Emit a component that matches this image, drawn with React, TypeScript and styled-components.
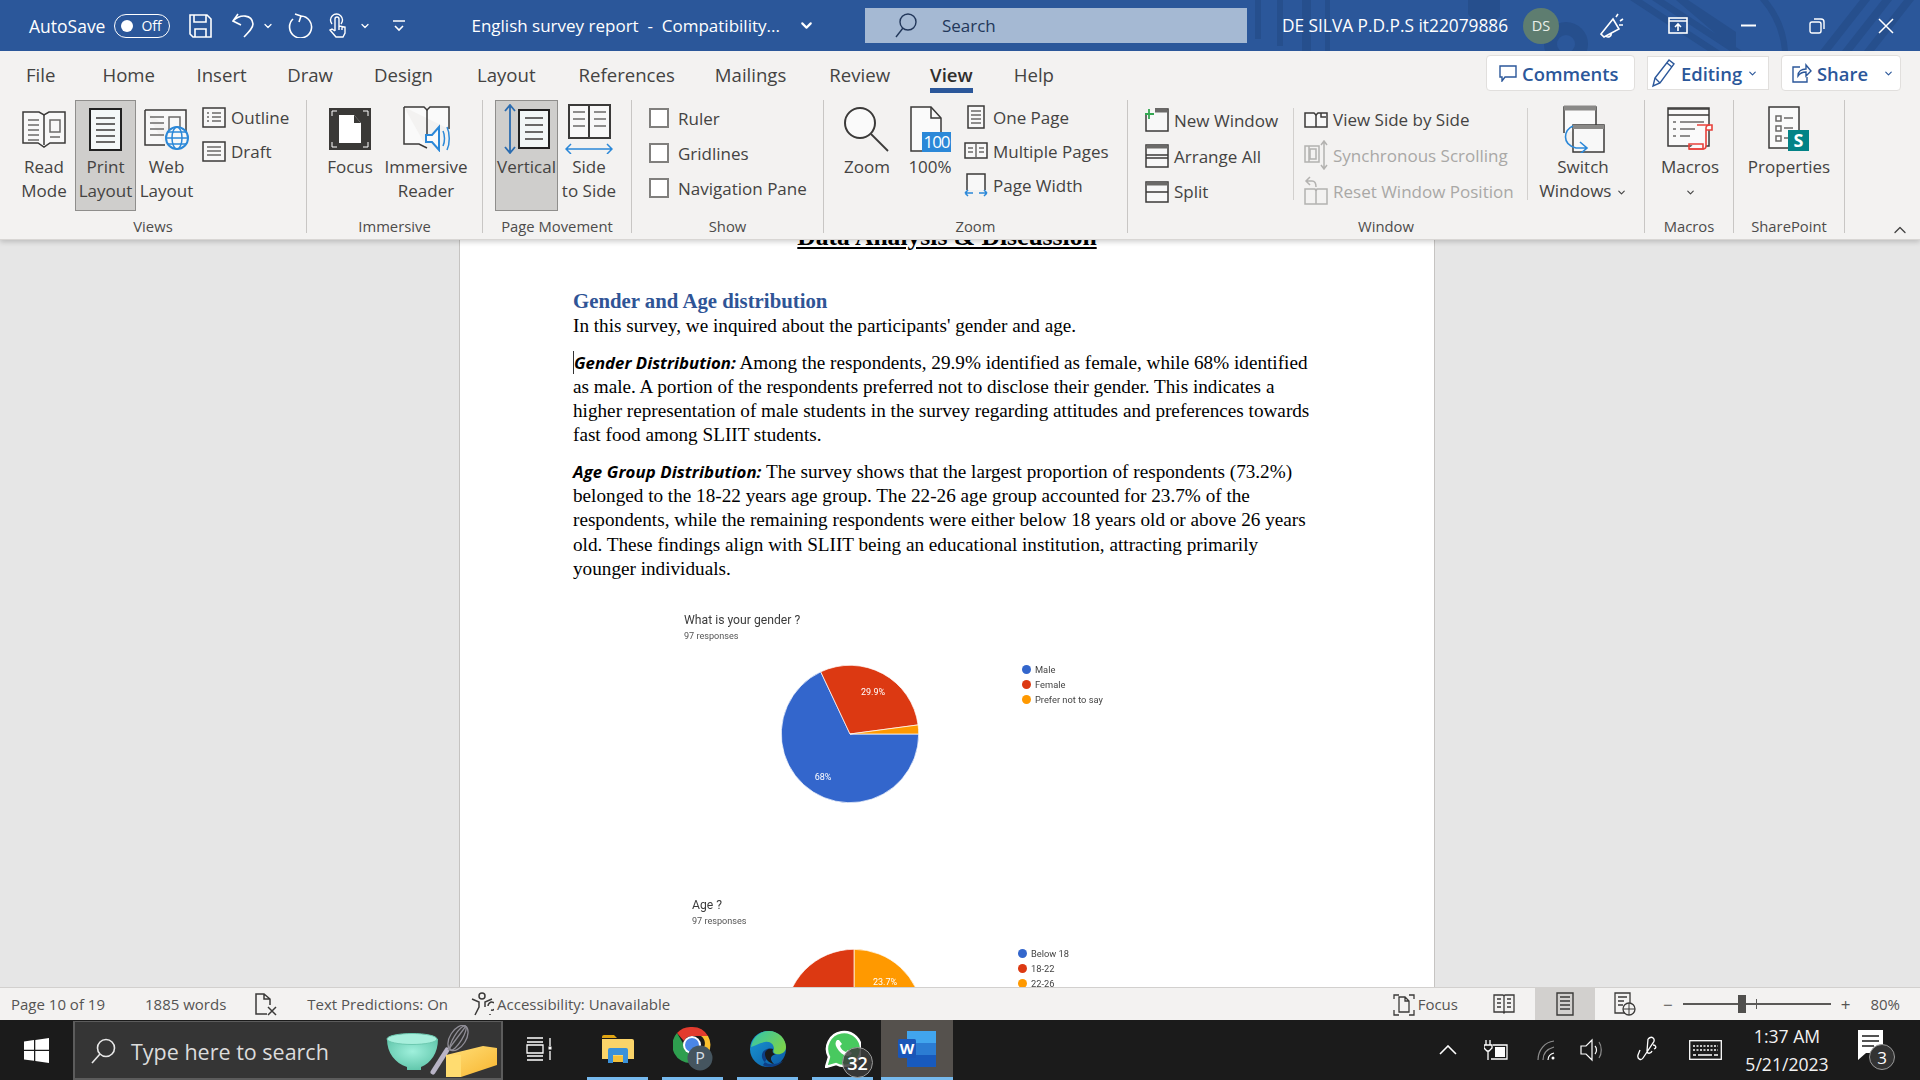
import React from 'react'
import styled, { createGlobalStyle } from 'styled-components'
import { ChevronDown, ChevronUp } from 'lucide-react'

const Global = createGlobalStyle`
  html, body { margin: 0; padding: 0; overflow: hidden; }
  body { font-family: "Open Sans", "Noto Sans", sans-serif; background: #e6e6e6; }
  * { box-sizing: border-box; }
`

const Shell = styled.div`
  width: 1920px;
  height: 1080px;
  display: flex;
  flex-direction: column;
  overflow: hidden;
`

/* ---------- title bar ---------- */
const TitleBar = styled.div`
  position: relative;
  height: 51px;
  flex: none;
  background: #2b579a;
  color: #fff;
  display: flex;
  align-items: center;
  font-size: 17px;
`
const TitleDeco = styled.svg`
  position: absolute;
  right: 0;
  top: 0;
`
const TitleItem = styled.div<{ $left: number }>`
  position: relative;
  margin-left: ${p => p.$left}px;
  display: flex;
  align-items: center;
  flex: none;
  white-space: nowrap;
`
const AutoSaveLabel = styled(TitleItem)`
  font-size: 17.5px;
`
const AccountName = styled(TitleItem)`
  font-size: 17.3px;
`
const Toggle = styled.div`
  width: 56px;
  height: 24px;
  border: 1.5px solid #fff;
  border-radius: 12px;
  display: flex;
  align-items: center;
  padding-left: 6px;
  gap: 8px;
  font-size: 14px;
  &::before {
    content: '';
    width: 12px;
    height: 12px;
    border-radius: 50%;
    background: #fff;
  }
`
const SearchBox = styled.div`
  position: relative;
  margin-left: 50px;
  width: 382px;
  height: 35px;
  flex: none;
  background: #a5b9d3;
  color: #22375a;
  display: flex;
  align-items: center;
  padding-left: 30px;
  gap: 25px;
  font-size: 17px;
`
const Avatar = styled.div`
  width: 36px;
  height: 36px;
  border-radius: 50%;
  background: #5e7d70;
  color: #e9efe9;
  font-size: 14.5px;
  display: flex;
  align-items: center;
  justify-content: center;
`

/* ---------- tabs ---------- */
const TabRow = styled.div`
  position: relative;
  z-index: 3;
  height: 44px;
  flex: none;
  background: #f3f2f1;
  display: flex;
  align-items: flex-start;
  padding-left: 26px;
`
const Tab = styled.div<{ $active?: boolean; $gap: number }>`
  height: 42px;
  margin-right: ${p => p.$gap}px;
  padding-top: 11px;
  font-size: 18.6px;
  line-height: 26px;
  color: ${p => (p.$active ? '#2f2e2d' : '#444342')};
  font-weight: ${p => (p.$active ? 600 : 400)};
  border-bottom: ${p => (p.$active ? '5px solid #2b579a' : '5px solid transparent')};
`
const TabActions = styled.div`
  position: absolute;
  top: 4px;
  right: 19px;
  display: flex;
  gap: 12px;
`
const ActionButton = styled.div<{ $width: number; $square?: boolean; $pad: number }>`
  width: ${p => p.$width}px;
  height: ${p => (p.$square ? 34 : 36)}px;
  margin-top: ${p => (p.$square ? 1 : 0)}px;
  padding-left: ${p => p.$pad}px;
  background: #fff;
  border: 1px solid #e1dfdd;
  border-radius: ${p => (p.$square ? 0 : 4)}px;
  display: flex;
  align-items: center;
  gap: 5px;
  color: #2b579a;
  font-size: 18.4px;
  font-weight: 600;
`
const ShareGap = styled.span`
  width: 5px;
`

/* ---------- ribbon ---------- */
const Ribbon = styled.div`
  position: relative;
  z-index: 2;
  height: 145px;
  flex: none;
  background: #f3f2f1;
  border-bottom: 1px solid #d8d6d4;
  box-shadow: 0 2px 5px rgba(0, 0, 0, 0.18);
  display: flex;
  align-items: flex-start;
  padding-top: 5px;
  color: #444342;
  font-size: 17px;
`
const Group = styled.div<{ $width: number }>`
  width: ${p => p.$width}px;
  height: 133px;
  flex: none;
  border-right: 1px solid #c8c6c4;
  display: flex;
  flex-direction: column;
`
const GroupBody = styled.div<{ $pad: number }>`
  height: 116px;
  flex: none;
  padding-left: ${p => p.$pad}px;
  display: flex;
  align-items: flex-start;
`
const GroupLabel = styled.div`
  height: 20px;
  flex: none;
  line-height: 20px;
  text-align: center;
  font-size: 14.8px;
  color: #4d4c4b;
`
const LargeButton = styled.div<{ $width: number; $pressed?: boolean; $gap?: number; $before?: number }>`
  width: ${p => p.$width}px;
  height: 111px;
  flex: none;
  margin-left: ${p => p.$before ?? 0}px;
  margin-right: ${p => p.$gap ?? 0}px;
  background: ${p => (p.$pressed ? '#cfcecc' : 'transparent')};
  outline: ${p => (p.$pressed ? '1px solid #8f8e8c' : 'none')};
  outline-offset: -1px;
  display: flex;
  flex-direction: column;
  align-items: center;
`
const IconZone = styled.div`
  height: 55px;
  width: 100%;
  display: flex;
  align-items: center;
  justify-content: center;
  padding-top: 3px;
  flex: none;
`
const Caption = styled.div`
  text-align: center;
  line-height: 24px;
  white-space: nowrap;
`
const CaptionChevron = styled(ChevronDown)`
  vertical-align: -1px;
`
const SmallColumn = styled.div<{ $width?: number; $divider?: boolean; $top: number; $gap: number; $rowGap?: number }>`
  width: ${p => (p.$width ? `${p.$width}px` : 'auto')};
  height: ${p => (p.$divider ? 92 : 100)}px;
  margin-left: ${p => p.$gap}px;
  margin-top: ${p => (p.$divider ? 8 : 0)}px;
  padding-top: ${p => p.$top}px;
  border-right: ${p => (p.$divider ? '1px solid #d2d0ce' : 'none')};
  flex: none;
  display: flex;
  flex-direction: column;
  gap: ${p => p.$rowGap ?? 10}px;
`
const SmallRow = styled.div<{ $muted?: boolean }>`
  height: 24px;
  display: flex;
  align-items: center;
  white-space: nowrap;
  color: ${p => (p.$muted ? '#a9a8a6' : 'inherit')};
  & > svg { flex: none; margin-right: 5px; }
`
const CheckColumn = styled.div`
  padding-top: 6px;
  display: flex;
  flex-direction: column;
  gap: 11px;
`
const CheckRow = styled.label`
  height: 24px;
  display: flex;
  align-items: center;
  gap: 9px;
  white-space: nowrap;
`
const CheckBox = styled.span`
  width: 20px;
  height: 20px;
  background: #fff;
  border: 2px solid #807f7d;
`
const Collapse = styled.div`
  position: absolute;
  right: 10px;
  bottom: -1px;
  color: #444;
  display: flex;
`

/* ---------- document ---------- */
const DocArea = styled.div`
  flex: 1;
  min-height: 0;
  overflow: hidden;
  background: #e6e6e6;
  padding-left: 459px;
`
const Page = styled.div`
  width: 976px;
  height: 1100px;
  background: #fff;
  border-left: 1px solid #c6c4c2;
  border-right: 1px solid #c6c4c2;
  padding-left: 113px;
  font-family: "Liberation Serif", serif;
  color: #000;
`
const ClippedHeading = styled.div`
  margin: -19px 0 0 -113px;
  height: 32px;
  line-height: 32px;
  text-align: center;
  font-size: 25.6px;
  font-weight: 700;
  text-decoration: underline;
  white-space: nowrap;
`
const SectionTitle = styled.h2`
  margin: 35px 0 0;
  font-size: 20.8px;
  line-height: 26px;
  font-weight: 700;
  color: #2f5496;
`
const Para = styled.p<{ $top: number }>`
  margin: ${p => p.$top}px 0 0;
  font-size: 19.2px;
  line-height: 24.2px;
  white-space: nowrap;
`
const Lead = styled.span`
  font-family: "Open Sans", sans-serif;
  font-weight: 700;
  font-style: italic;
  font-size: 16.8px;
  line-height: 20px;
  border-left: 1px solid #333;
`
const LeadPlain = styled(Lead)`
  border-left: 0;
  letter-spacing: 0.1px;
`
const Chart = styled.figure<{ $left: number; $top: number }>`
  margin: ${p => p.$top}px 0 0 ${p => p.$left}px;
  font-family: Roboto, "Liberation Sans", sans-serif;
  color: #333;
  filter: blur(0.25px);
`
const ChartTitle = styled.div`
  font-size: 12.2px;
  line-height: 16px;
  color: #3c3c3c;
`
const ChartSub = styled.div`
  font-size: 9.1px;
  line-height: 14px;
  margin-top: 1px;
  color: #555;
`
const ChartBody = styled.div<{ $pieLeft: number; $pieTop: number; $legendGap: number }>`
  display: flex;
  align-items: flex-start;
  margin-top: ${p => p.$pieTop}px;
  padding-left: ${p => p.$pieLeft}px;
  gap: ${p => p.$legendGap}px;
`
const Legend = styled.ul<{ $top: number }>`
  list-style: none;
  margin: ${p => p.$top}px 0 0;
  padding: 0;
`
const LegendItem = styled.li<{ $color: string }>`
  height: 14.7px;
  display: flex;
  align-items: center;
  gap: 4px;
  font-size: 9.3px;
  color: #444;
  white-space: nowrap;
  &::before {
    content: '';
    width: 9px;
    height: 9px;
    border-radius: 50%;
    background: ${p => p.$color};
  }
`

/* ---------- status bar ---------- */
const StatusBar = styled.div`
  position: relative;
  z-index: 2;
  height: 33px;
  flex: none;
  background: #f3f2f1;
  border-top: 1px solid #d2d0ce;
  display: flex;
  align-items: center;
  color: #555453;
  font-size: 15px;
  padding-right: 20px;
`
const StatusItem = styled.div<{ $left: number | 'auto' }>`
  margin-left: ${p => (p.$left === 'auto' ? 'auto' : `${p.$left}px`)};
  display: flex;
  align-items: center;
  gap: 3px;
  white-space: nowrap;
  flex: none;
`
const ViewButton = styled.div<{ $active?: boolean; $left: number; $width: number }>`
  width: ${p => p.$width}px;
  height: 32px;
  margin-left: ${p => p.$left}px;
  background: ${p => (p.$active ? '#d2d0ce' : 'transparent')};
  display: flex;
  align-items: center;
  justify-content: center;
  flex: none;
`
const ZoomSlider = styled.div`
  position: relative;
  width: 148px;
  height: 2px;
  margin-left: 10px;
  background: #5a5957;
  flex: none;
`
const ZoomThumb = styled.span`
  position: absolute;
  left: 55px;
  top: -8px;
  width: 8px;
  height: 18px;
  background: #504f4d;
`
const ZoomTick = styled.span`
  position: absolute;
  left: 73px;
  top: -4px;
  width: 1px;
  height: 10px;
  background: #5a5957;
`
const ZoomSign = styled.span<{ $left: number }>`
  margin-left: ${p => p.$left}px;
  font-size: 17px;
  line-height: 1;
  color: #555453;
  flex: none;
`

/* ---------- taskbar ---------- */
const Taskbar = styled.div`
  height: 60px;
  flex: none;
  background: #1b1b1b;
  display: flex;
  align-items: stretch;
  color: #fff;
`
const StartButton = styled.div`
  width: 73px;
  display: flex;
  align-items: center;
  padding-left: 24px;
  flex: none;
`
const TaskSearch = styled.div`
  width: 430px;
  flex: none;
  margin-top: 1px;
  background: #353535;
  border: 2px solid #5c5c5c;
  border-top-width: 1px;
  display: flex;
  align-items: center;
  padding-left: 15px;
  padding-top: 2px;
  gap: 15px;
  font-size: 21.5px;
  color: #dcdcdc;
  white-space: nowrap;
`
const SearchArt = styled.svg`
  margin-left: auto;
  margin-right: 3px;
  flex: none;
`
const TaskIcon = styled.div<{ $active?: boolean; $left: number; $width?: number; $open?: boolean }>`
  width: ${p => p.$width ?? 61}px;
  margin-left: ${p => p.$left}px;
  flex: none;
  position: relative;
  display: flex;
  align-items: center;
  justify-content: center;
  background: ${p => (p.$active ? '#55514d' : 'transparent')};
  border-bottom: 3px solid ${p => (p.$open ? '#76b9ed' : 'transparent')};
`
const IconBadge = styled.span`
  position: absolute;
  left: 30px;
  top: 27px;
  width: 31px;
  height: 31px;
  border-radius: 50%;
  background: rgba(60, 60, 60, 0.85);
  border: 1px solid #9a9a9a;
  color: #fff;
  font-size: 18px;
  font-weight: 600;
  display: flex;
  align-items: center;
  justify-content: center;
`
const Tray = styled.div`
  margin-left: auto;
  display: flex;
  align-items: center;
  flex: none;
`
const TrayIcon = styled.div<{ $left: number }>`
  margin-left: ${p => p.$left}px;
  display: flex;
  flex: none;
`
const Clock = styled.div`
  width: 100px;
  margin-left: 15px;
  text-align: center;
  font-size: 17.6px;
  line-height: 28px;
  color: #f2f2f2;
`
const Notify = styled.div`
  position: relative;
  width: 32px;
  height: 40px;
  margin: 0 30px 0 21px;
  flex: none;
`
const NotifyBadge = styled.span`
  position: absolute;
  left: 11px;
  top: 14px;
  width: 26px;
  height: 26px;
  border-radius: 50%;
  background: #333;
  border: 1px solid #9a9a9a;
  font-size: 17px;
  display: flex;
  align-items: center;
  justify-content: center;
`

/* ---------- icons ---------- */
const dark = '#3b3a39'
const grey = '#6b6a68'
const blue = '#2b88d8'

const Svg = (p: { w: number; h: number; children: React.ReactNode; color?: string }) => (
  <svg width={p.w} height={p.h} viewBox={`0 0 ${p.w} ${p.h}`} fill="none" stroke={p.color ?? dark} strokeWidth={1.5}>
    {p.children}
  </svg>
)

const Lines = (p: { x: number; y: number; w: number; n: number; step: number; color?: string }) => (
  <>
    {Array.from({ length: p.n }).map((_, i) => (
      <path key={i} d={`M${p.x} ${p.y + i * p.step}h${p.w}`} stroke={p.color ?? grey} />
    ))}
  </>
)

const ReadIcon = () => (
  <Svg w={44} h={38}>
    <path d="M1 2h16l5 3 5-3h16v31H28l-6 4-6-4H1z" fill="#f8f8f8" />
    <path d="M22 5v30" />
    <Lines x={6} y={10} w={11} n={5} step={5} />
    <Lines x={28} y={27} w={10} n={1} step={5} />
    <rect x={28} y={10} width={10} height={12} stroke={grey} />
  </Svg>
)
const PrintIcon = () => (
  <Svg w={33} h={43}>
    <rect x={1} y={1} width={31} height={41} fill="#f4f8f8" strokeWidth={2} stroke="#222" />
    <Lines x={7} y={10} w={19} n={5} step={6} color={dark} />
  </Svg>
)
const WebIcon = () => (
  <Svg w={46} h={42}>
    <path d="M1 2h41v25H32M1 2v35h20" fill="#f8f8f8" />
    <Lines x={6} y={9} w={14} n={4} step={6} />
    <rect x={25} y={9} width={11} height={15} stroke={grey} />
    <circle cx={33} cy={30} r={11} fill="#f8f8f8" stroke={blue} strokeWidth={2} />
    <ellipse cx={33} cy={30} rx={5} ry={11} stroke={blue} />
    <path d="M22 30h22M24 24h18M24 36h18" stroke={blue} />
  </Svg>
)
const OutlineIcon = () => (
  <Svg w={24} h={21}>
    <rect x={1} y={1} width={22} height={19} fill="#f8f8f8" />
    <path d="M5 6h2M5 10h2M5 14h2M10 6h9M10 10h9M10 14h9" stroke={grey} />
  </Svg>
)
const DraftIcon = () => (
  <Svg w={24} h={21}>
    <rect x={1} y={1} width={22} height={19} fill="#f8f8f8" />
    <path d="M5 6h14M5 10h14M5 14h14" stroke={grey} />
  </Svg>
)
const FocusIcon = () => (
  <svg width={42} height={42} viewBox="0 0 42 42">
    <rect width={42} height={42} fill="#3a3937" />
    <path d="M10 7h15l7 8v20H10z" fill="#fff" />
    <path d="M25 7v8h7z" fill="#3a3937" />
    <path d="M3 8V3h5M39 8V3h-5M3 34v5h5M39 34v5h-5" stroke="#fff" fill="none" />
  </svg>
)
const ImmersiveIcon = () => (
  <Svg w={47} h={46}>
    <path d="M1 1h20l3 3 3-3h19v22M1 1v37h15l8 4" fill="#fafafa" />
    <path d="M24 4v30" />
    <path d="M23 29h6l7-8v23l-7-8h-6z" fill="#fafafa" stroke={blue} strokeWidth={2} />
    <path d="M40 25c2 4 2 11 0 15M44 21c3 6 3 17 0 23" stroke={blue} />
  </Svg>
)
const VerticalIcon = () => (
  <Svg w={47} h={50}>
    <path d="M7 1v48M2 7l5-6 5 6M2 43l5 6 5-6" stroke="#2b6cb0" strokeWidth={1.8} />
    <rect x={16} y={6} width={30} height={38} fill="#f2f7f7" stroke="#222" strokeWidth={2} />
    <Lines x={22} y={14} w={18} n={4} step={7} color={dark} />
  </Svg>
)
const SideIcon = () => (
  <Svg w={48} h={50}>
    <rect x={4} y={1} width={41} height={33} fill="#f8f8f8" strokeWidth={2} />
    <path d="M24 1v33" strokeWidth={2} />
    <Lines x={8} y={8} w={12} n={3} step={7} />
    <Lines x={29} y={8} w={12} n={3} step={7} />
    <path d="M1 45h46M6 40l-5 5 5 5M42 40l5 5-5 5" stroke={blue} />
  </Svg>
)
const ZoomIcon = () => (
  <Svg w={46} h={46}>
    <circle cx={16} cy={17} r={15} fill="#fafafa" strokeWidth={2} />
    <path d="M27 28l17 17" strokeWidth={1.8} />
  </Svg>
)
const HundredIcon = () => (
  <svg width={41} height={46} viewBox="0 0 41 46">
    <path d="M1 1h20l10 11v33H1z" fill="#fafafa" stroke={dark} strokeWidth={1.5} />
    <path d="M21 1v11h10" fill="none" stroke={dark} strokeWidth={1.5} />
    <rect x={12} y={26} width={29} height={20} fill="#2b88d8" />
    <text x={26.5} y={42} fill="#fff" fontSize={17} textAnchor="middle" fontFamily="Open Sans" letterSpacing={-1}>100</text>
  </svg>
)
const OnePageIcon = () => (
  <Svg w={24} h={24}>
    <rect x={4} y={1} width={16} height={22} fill="#f8f8f8" />
    <path d="M7 6h10M7 10h10M7 14h10M7 18h10" stroke={grey} />
  </Svg>
)
const MultiIcon = () => (
  <Svg w={24} h={18}>
    <rect x={1} y={1} width={22} height={15} fill="#f8f8f8" />
    <path d="M12 1v15M4 6h5M4 10h5M15 6h5M15 10h5" stroke={grey} />
  </Svg>
)
const WidthIcon = () => (
  <Svg w={24} h={24}>
    <path d="M3 17V1h18v16" fill="#f8f8f8" />
    <path d="M1 20h8M1 20l3-3M1 20l3 3M23 20h-8M23 20l-3-3M23 20l-3 3" stroke={blue} />
  </Svg>
)
const NewWindowIcon = () => (
  <Svg w={24} h={24}>
    <path d="M1 5v18h22V1H10" fill="#f8f8f8" />
    <path d="M10 3h13" strokeWidth={3} stroke={grey} />
    <path d="M4 1v10M0 6h9" stroke="#33a852" strokeWidth={1.8} />
  </Svg>
)
const ArrangeIcon = () => (
  <Svg w={24} h={24}>
    <rect x={1} y={1} width={22} height={22} fill="#f8f8f8" />
    <path d="M1 11h22M1 14h22" />
    <path d="M1 3h22" strokeWidth={3} stroke={grey} />
  </Svg>
)
const SplitIcon = () => (
  <Svg w={24} h={22}>
    <rect x={1} y={1} width={22} height={20} fill="#f8f8f8" />
    <path d="M1 11h22" />
    <path d="M1 3h22" strokeWidth={3} stroke={grey} />
  </Svg>
)
const SideBySideIcon = () => (
  <Svg w={24} h={18}>
    <path d="M1 2h9l2 2 2-2h9v14H1z" fill="#f8f8f8" />
    <path d="M12 4v12M17 2v4h5" />
  </Svg>
)
const SyncIcon = () => (
  <Svg w={24} h={30} color="#b3b2b0">
    <path d="M1 6h14v16H1zM5 6v16" />
    <path d="M6 9h6v10H6z" />
    <path d="M20 1v28M17 5l3-4 3 4M17 25l3 4 3-4" />
  </Svg>
)
const ResetIcon = () => (
  <Svg w={24} h={30} color="#b3b2b0">
    <path d="M6 1L2 5l4 4M2 5h6c3 0 4 2 4 6" />
    <path d="M1 13h10l1 2 1-2h10v15H1zM12 15v13" />
  </Svg>
)
const SwitchIcon = () => (
  <Svg w={44} h={48}>
    <path d="M3 28V2h32v19" fill="#fafafa" />
    <path d="M3 3h32" strokeWidth={5} stroke="#8a8987" />
    <rect x={12} y={20} width={31} height={27} fill="#f8f8f8" />
    <path d="M12 22h31" strokeWidth={4} stroke="#8a8987" />
    <path d="M12 21c-9 4-12 18 3 22h10M19 37l7 6-7 6" stroke={blue} strokeWidth={1.6} />
  </Svg>
)
const MacrosIcon = () => (
  <Svg w={46} h={46}>
    <rect x={1} y={2} width={41} height={38} fill="#fafafa" />
    <path d="M1 9h41M1 3h41" />
    <path d="M6 16h3M6 23h3M6 30h3M13 16h24M13 23h15M13 30h10" stroke={grey} />
    <path d="M22 43h14c3 0 3-3 3-3V22c0-3 2-3 4-3h2v5h-6" fill="#fafafa" stroke="#e8413b" strokeWidth={1.6} />
    <path d="M22 38h14v5H22zM30 19h13" stroke="#e8413b" strokeWidth={1.6} />
  </Svg>
)
const PropsIcon = () => (
  <svg width={42} height={46} viewBox="0 0 42 46" fill="none">
    <rect x={1} y={1} width={30} height={41} fill="#fafafa" stroke={dark} strokeWidth={1.5} />
    <path d="M8 10h5v5H8zM8 20h5v5H8zM8 30h5v5H8zM16 12h9M16 22h9M16 32h4" stroke={grey} strokeWidth={1.5} />
    <rect x={20} y={24} width={21} height={21} fill="#038387" />
    <text x={30.5} y={41} fontSize={18} fontWeight={700} fill="#fff" textAnchor="middle" fontFamily="Open Sans">S</text>
  </svg>
)
const White = (p: { w: number; h: number; children: React.ReactNode; sw?: number }) => (
  <svg width={p.w} height={p.h} viewBox={`0 0 ${p.w} ${p.h}`} fill="none" stroke="#fff" strokeWidth={p.sw ?? 1.6}>
    {p.children}
  </svg>
)

const Chevron = (p: { size?: number; color?: string }) => (
  <ChevronDown size={p.size ?? 12} color={p.color ?? '#fff'} strokeWidth={2.5} />
)

function ChromeLogo() {
  return (
    <svg width={40} height={46} viewBox="0 0 40 46">
      <path d="M19 1a18 18 0 0 1 16 9H19a9 9 0 0 0-8 5L4 7A18 18 0 0 1 19 1z" fill="#e33b2e" />
      <path d="M35 10a18 18 0 0 1-14 27l8-13a9 9 0 0 0-1-14z" fill="#fbc02d" />
      <path d="M4 7l7 12a9 9 0 0 0 10 9l-2 9A18 18 0 0 1 4 7z" fill="#2e9e4f" />
      <circle cx={19} cy={19} r={9} fill="#fff" />
      <circle cx={19} cy={19} r={7} fill="#4a86e8" />
      <circle cx={27} cy={32} r={12.5} fill="#45555f" />
      <text x={27} y={38} fontSize={16} fill="#d5dde2" textAnchor="middle" fontFamily="Open Sans">P</text>
    </svg>
  )
}
function EdgeLogo() {
  return (
    <svg width={38} height={38} viewBox="0 0 38 38">
      <defs>
        <linearGradient id="eg" x1="0" y1="0" x2="1" y2="1">
          <stop offset="0" stopColor="#1a9ad6" />
          <stop offset="1" stopColor="#0c59a4" />
        </linearGradient>
        <linearGradient id="eg2" x1="0" y1="0" x2="1" y2="0.6">
          <stop offset="0" stopColor="#31c4b0" />
          <stop offset="1" stopColor="#7ad34c" />
        </linearGradient>
      </defs>
      <circle cx={19} cy={19} r={18} fill="url(#eg)" />
      <path d="M2 17C4 6 12 1 20 1c10 0 17 8 17 16 0 6-6 8-10 7-3-1-3-3-2-5 0-5-4-8-9-7-6 1-10 4-14 5z" fill="url(#eg2)" />
      <path d="M24 19c-6-2-12 2-11 8 1 7 10 10 21 4-6 7-16 7-20 4" fill="#0d3f86" />
      <path d="M16 24c0-4 4-6 8-5-1 3 0 5 3 5-4 1-8 4-2 10-6-1-9-6-9-10z" fill="#1b1b1b" />
    </svg>
  )
}
function WhatsappLogo() {
  return (
    <svg width={36} height={38} viewBox="0 0 36 38">
      <path d="M1 37l3-10A17 17 0 1 1 11 34z" fill="#48c95f" stroke="#fff" strokeWidth={2.5} />
      <path d="M12 10c-2 2-2 5 0 8 2 4 6 7 10 8 2 0 4-1 5-3l-4-3-2 2c-3-1-5-3-6-6l2-2-3-4z" fill="#fff" />
    </svg>
  )
}
function WordLogo() {
  return (
    <svg width={38} height={38} viewBox="0 0 38 38">
      <path d="M9 1h27a2 2 0 0 1 2 2v32a2 2 0 0 1-2 2H11a2 2 0 0 1-2-2z" fill="#2b7cd3" />
      <rect x={9} y={1} width={29} height={12} fill="#41a5ee" />
      <rect x={9} y={25} width={29} height={12} fill="#185abd" />
      <rect x={0} y={9} width={18} height={19} rx={1.5} fill="#1a56b8" />
      <text x={9} y={24} fontSize={15} fontWeight={700} fill="#fff" textAnchor="middle" fontFamily="Open Sans">W</text>
    </svg>
  )
}
function FolderLogo() {
  return (
    <svg width={32} height={30} viewBox="0 0 32 30">
      <path d="M0 3a2 2 0 0 1 2-2h10l3 3H0z" fill="#e0a412" />
      <path d="M0 5h30a2 2 0 0 1 2 2v18H0z" fill="#fbd469" />
      <path d="M6 29V16a2 2 0 0 1 2-2h16a2 2 0 0 1 2 2v13h-5v-8H11v8z" fill="#3a91d9" />
      <rect x={11} y={22} width={10} height={6} fill="#f4c13a" />
    </svg>
  )
}

const Pie = (p: { slices: { from: number; to: number; color: string }[]; labels: { x: number; y: number; t: string }[] }) => {
  const cx = 70
  const cy = 70
  const r = 68.7
  const pt = (deg: number) => {
    const a = ((deg - 90) * Math.PI) / 180
    return `${cx + r * Math.cos(a)} ${cy + r * Math.sin(a)}`
  }
  return (
    <svg width={140} height={140} viewBox="0 0 140 140">
      {p.slices.map(s => (
        <path
          key={s.color}
          d={`M${cx} ${cy}L${pt(s.from)}A${r} ${r} 0 ${s.to - s.from > 180 ? 1 : 0} 1 ${pt(s.to)}Z`}
          fill={s.color}
          stroke="#fff"
          strokeWidth={0.7}
        />
      ))}
      {p.labels.map(l => (
        <text key={l.t} x={l.x} y={l.y} fill="#fff" fontSize={9} textAnchor="middle" fontFamily="Roboto">
          {l.t}
        </text>
      ))}
    </svg>
  )
}

const tabs: [string, number, boolean?][] = [
  ['File', 47], ['Home', 41.5], ['Insert', 40.5], ['Draw', 41], ['Design', 44], ['Layout', 43],
  ['References', 40], ['Mailings', 43], ['Review', 40], ['View', 41, true], ['Help', 0],
]

export default function App() {
  return (
    <Shell>
      <Global />
      <TitleBar>
        <TitleDeco width={680} height={51} viewBox="0 0 680 51" fill="#264f8d">
          <path d="M15 0h6v39h-6zM37 0h6v46h-6zM62 0h9v51h-9zM85 0h5v51h-5z" />
          <path d="M228 0h32v16c-6 8-24 10-32-2z" />
          <circle cx={326} cy={44} r={22} />
          <circle cx={326} cy={44} r={9} fill="#2b579a" />
          <path d="M390 0h12l78 51h-12zM412 0h12l78 51h-12zM436 0h12l48 32v19z" />
          <path d="M528 0a90 90 0 0 1 20 51h-6a90 90 0 0 0-22-51z" />
          <path d="M620 0h10l-40 51h-10zM642 0h10l-40 51h-10zM664 0h10l-40 51h-10z" />
        </TitleDeco>
        <AutoSaveLabel $left={29}>AutoSave</AutoSaveLabel>
        <TitleItem $left={9}><Toggle>Off</Toggle></TitleItem>
        <TitleItem $left={19}>
          <White w={23} h={24}>
            <path d="M1 1h17l4 4v18H4l-3-3zM5 1v7h12V1M6 23v-8h11v8" />
          </White>
        </TitleItem>
        <TitleItem $left={20}>
          <White w={22} h={25}>
            <path d="M6 1L1 8l8 4M1 8C8 1 20 1 21 11c0 4-4 8-9 13" />
          </White>
        </TitleItem>
        <TitleItem $left={8}><Chevron /></TitleItem>
        <TitleItem $left={14}>
          <White w={25} h={25}>
            <path d="M13 3a11 11 0 1 1-8 3M7 1l6 2-2 6" />
          </White>
        </TitleItem>
        <TitleItem $left={16}>
          <White w={18} h={25} sw={1.4}>
            <path d="M3 11a6 6 0 1 1 9 0M6 18V6a2 2 0 0 1 4 0v7l6 1v6l-2 4H7l-6-7 2-1 3 2M10 13v4M13 14v3" />
          </White>
        </TitleItem>
        <TitleItem $left={12}><Chevron /></TitleItem>
        <TitleItem $left={21}>
          <White w={14} h={12} sw={1.6}>
            <path d="M1 1h12M3 6l4 4 4-4" />
          </White>
        </TitleItem>
        <TitleItem $left={65}>English survey report&nbsp; -&nbsp; Compatibility...</TitleItem>
        <TitleItem $left={18}><ChevronDown size={17} color="#fff" strokeWidth={3} /></TitleItem>
        <SearchBox>
          <svg width={22} height={26} viewBox="0 0 22 26" fill="none" stroke="#22375a" strokeWidth={1.4}>
            <circle cx={13} cy={9} r={8} />
            <path d="M8 15L1 24" />
          </svg>
          Search
        </SearchBox>
        <AccountName $left={35}>DE SILVA P.D.P.S it22079886</AccountName>
        <TitleItem $left={15}><Avatar>DS</Avatar></TitleItem>
        <TitleItem $left={41}>
          <White w={24} h={25}>
            <path d="M13 6l-12 15 3 3 15-8zM6 23a3 3 0 0 0 5-3M16 4l2-3M20 8l3-2M19 12h4" />
          </White>
        </TitleItem>
        <TitleItem $left={44}>
          <White w={20} h={17}>
            <rect x={1} y={1} width={18} height={15} />
            <path d="M1 4h18M10 14V7M7 10l3-3 3 3" />
          </White>
        </TitleItem>
        <TitleItem $left={53}>
          <White w={15} h={3} sw={2}><path d="M0 1.5h15" /></White>
        </TitleItem>
        <TitleItem $left={53}>
          <White w={16} h={16} sw={1.4}>
            <rect x={1} y={4} width={11} height={11} rx={2} />
            <path d="M5 1h7a3 3 0 0 1 3 3v7" />
          </White>
        </TitleItem>
        <TitleItem $left={53}>
          <White w={16} h={16} sw={1.5}><path d="M1 1l14 14M15 1L1 15" /></White>
        </TitleItem>
      </TitleBar>

      <TabRow>
        {tabs.map(([name, gap, active]) => (
          <Tab key={name} $gap={gap} $active={active}>{name}</Tab>
        ))}
        <TabActions>
          <ActionButton $width={149} $pad={12}>
            <svg width={18} height={18} viewBox="0 0 18 18" fill="none" stroke="#2b579a" strokeWidth={1.4}>
              <path d="M1 2h16v11H6l-3 4v-4H1z" />
            </svg>
            Comments
          </ActionButton>
          <ActionButton $width={122} $square $pad={2}>
            <svg width={26} height={30} viewBox="0 0 26 30" fill="none" stroke="#2b579a" strokeWidth={1.4}>
              <path d="M5 20L19 2l5 4L10 25l-7 3z" />
              <path d="M5 20l5 5M17 5l5 4" />
            </svg>
            Editing
            <Chevron size={11} color="#2b579a" />
          </ActionButton>
          <ActionButton $width={120} $pad={10}>
            <svg width={20} height={20} viewBox="0 0 20 20" fill="none" stroke="#2b579a" strokeWidth={1.4}>
              <path d="M8 4H1v15h14v-5M6 13c0-5 4-7 8-7V2l5 6-5 5V9c-3 0-6 1-8 4z" />
            </svg>
            Share
            <ShareGap />
            <Chevron size={11} color="#2b579a" />
          </ActionButton>
        </TabActions>
      </TabRow>

      <Ribbon>
        <Group $width={307}>
          <GroupBody $pad={14}>
            <LargeButton $width={60} $gap={1}><IconZone><ReadIcon /></IconZone><Caption>Read<br />Mode</Caption></LargeButton>
            <LargeButton $width={61} $pressed><IconZone><PrintIcon /></IconZone><Caption>Print<br />Layout</Caption></LargeButton>
            <LargeButton $width={61}><IconZone><WebIcon /></IconZone><Caption>Web<br />Layout</Caption></LargeButton>
            <SmallColumn $gap={5} $top={5}>
              <SmallRow><OutlineIcon />Outline</SmallRow>
              <SmallRow><DraftIcon />Draft</SmallRow>
            </SmallColumn>
          </GroupBody>
          <GroupLabel>Views</GroupLabel>
        </Group>
        <Group $width={176}>
          <GroupBody $pad={15}>
            <LargeButton $width={56} $gap={3}><IconZone><FocusIcon /></IconZone><Caption>Focus</Caption></LargeButton>
            <LargeButton $width={90}><IconZone><ImmersiveIcon /></IconZone><Caption>Immersive<br />Reader</Caption></LargeButton>
          </GroupBody>
          <GroupLabel>Immersive</GroupLabel>
        </Group>
        <Group $width={149}>
          <GroupBody $pad={12}>
            <LargeButton $width={63} $pressed $gap={1}><IconZone><VerticalIcon /></IconZone><Caption>Vertical</Caption></LargeButton>
            <LargeButton $width={60}><IconZone><SideIcon /></IconZone><Caption>Side<br />to Side</Caption></LargeButton>
          </GroupBody>
          <GroupLabel>Page Movement</GroupLabel>
        </Group>
        <Group $width={192}>
          <GroupBody $pad={17}>
            <CheckColumn>
              <CheckRow><CheckBox />Ruler</CheckRow>
              <CheckRow><CheckBox />Gridlines</CheckRow>
              <CheckRow><CheckBox />Navigation Pane</CheckRow>
            </CheckColumn>
          </GroupBody>
          <GroupLabel>Show</GroupLabel>
        </Group>
        <Group $width={304}>
          <GroupBody $pad={15}>
            <LargeButton $width={56} $gap={5}><IconZone><ZoomIcon /></IconZone><Caption>Zoom</Caption></LargeButton>
            <LargeButton $width={60}><IconZone><HundredIcon /></IconZone><Caption>100%</Caption></LargeButton>
            <SmallColumn $gap={4} $top={5}>
              <SmallRow><OnePageIcon />One Page</SmallRow>
              <SmallRow><MultiIcon />Multiple Pages</SmallRow>
              <SmallRow><WidthIcon />Page Width</SmallRow>
            </SmallColumn>
          </GroupBody>
          <GroupLabel>Zoom</GroupLabel>
        </Group>
        <Group $width={517}>
          <GroupBody $pad={17}>
            <SmallColumn $width={149} $gap={0} $top={0} $divider $rowGap={12}>
              <SmallRow><NewWindowIcon />New Window</SmallRow>
              <SmallRow><ArrangeIcon />Arrange All</SmallRow>
              <SmallRow><SplitIcon />Split</SmallRow>
            </SmallColumn>
            <SmallColumn $width={224} $gap={10} $top={0} $divider $rowGap={12}>
              <SmallRow><SideBySideIcon />View Side by Side</SmallRow>
              <SmallRow $muted><SyncIcon />Synchronous Scrolling</SmallRow>
              <SmallRow $muted><ResetIcon />Reset Window Position</SmallRow>
            </SmallColumn>
            <LargeButton $width={100} $before={5}>
              <IconZone><SwitchIcon /></IconZone>
              <Caption>Switch<br />Windows <CaptionChevron size={11} color="#444" strokeWidth={2.5} /></Caption>
            </LargeButton>
          </GroupBody>
          <GroupLabel>Window</GroupLabel>
        </Group>
        <Group $width={89}>
          <GroupBody $pad={14}>
            <LargeButton $width={62}>
              <IconZone><MacrosIcon /></IconZone>
              <Caption>Macros<br /><CaptionChevron size={11} color="#444" strokeWidth={2.5} /></Caption>
            </LargeButton>
          </GroupBody>
          <GroupLabel>Macros</GroupLabel>
        </Group>
        <Group $width={111}>
          <GroupBody $pad={10}>
            <LargeButton $width={90}><IconZone><PropsIcon /></IconZone><Caption>Properties</Caption></LargeButton>
          </GroupBody>
          <GroupLabel>SharePoint</GroupLabel>
        </Group>
        <Collapse><ChevronUp size={20} strokeWidth={1.6} /></Collapse>
      </Ribbon>

      <DocArea>
        <Page>
          <ClippedHeading>Data Analysis &amp; Discussion</ClippedHeading>
          <SectionTitle>Gender and Age distribution</SectionTitle>
          <Para $top={0}>In this survey, we inquired about the participants' gender and age.</Para>
          <Para $top={12.5}>
            <Lead>Gender Distribution:</Lead> Among the respondents, 29.9% identified as female, while 68% identified<br />
            as male. A portion of the respondents preferred not to disclose their gender. This indicates a<br />
            higher representation of male students in the survey regarding attitudes and preferences towards<br />
            fast food among SLIIT students.
          </Para>
          <Para $top={12.5}>
            <LeadPlain>Age Group Distribution:</LeadPlain> The survey shows that the largest proportion of respondents (73.2%)<br />
            belonged to the 18-22 years age group. The 22-26 age group accounted for 23.7% of the<br />
            respondents, while the remaining respondents were either below 18 years old or above 26 years<br />
            old. These findings align with SLIIT being an educational institution, attracting primarily<br />
            younger individuals.
          </Para>
          <Chart $left={111} $top={30.5}>
            <ChartTitle>What is your gender ?</ChartTitle>
            <ChartSub>97 responses</ChartSub>
            <ChartBody $pieLeft={96} $pieTop={21} $legendGap={102}>
              <Pie
                slices={[
                  { from: 90, to: 334.8, color: '#3366cc' },
                  { from: 334.8, to: 82.4 + 360, color: '#dc3912' },
                  { from: 82.4, to: 90, color: '#ff9900' },
                ]}
                labels={[{ x: 43, y: 116, t: '68%' }, { x: 93, y: 31, t: '29.9%' }]}
              />
              <Legend $top={-1}>
                <LegendItem $color="#3366cc">Male</LegendItem>
                <LegendItem $color="#dc3912">Female</LegendItem>
                <LegendItem $color="#ff9900">Prefer not to say</LegendItem>
              </Legend>
            </ChartBody>
          </Chart>
          <Chart $left={119} $top={93}>
            <ChartTitle>Age ?</ChartTitle>
            <ChartSub>97 responses</ChartSub>
            <ChartBody $pieLeft={92} $pieTop={20} $legendGap={94}>
              <Pie
                slices={[
                  { from: 0, to: 85.3, color: '#ff9900' },
                  { from: 85.3, to: 360, color: '#dc3912' },
                ]}
                labels={[{ x: 101, y: 37, t: '23.7%' }]}
              />
              <Legend $top={-1}>
                <LegendItem $color="#3366cc">Below 18</LegendItem>
                <LegendItem $color="#dc3912">18-22</LegendItem>
                <LegendItem $color="#ff9900">22-26</LegendItem>
              </Legend>
            </ChartBody>
          </Chart>
        </Page>
      </DocArea>

      <StatusBar>
        <StatusItem $left={11}>Page 10 of 19</StatusItem>
        <StatusItem $left={40}>1885 words</StatusItem>
        <StatusItem $left={28}>
          <Svg w={24} h={24}>
            <path d="M13 22H2V2h8l6 5v6M10 2v5h6M14 15l8 8M22 15l-8 8" />
          </Svg>
        </StatusItem>
        <StatusItem $left={29}>Text Predictions: On</StatusItem>
        <StatusItem $left={23}>
          <Svg w={23} h={24}>
            <circle cx={11} cy={4} r={3} />
            <path d="M1 7l7 3v5l-4 8M21 7l-7 3v5M17 14a4 4 0 1 1 3 4M19 23v-1" />
          </Svg>
          Accessibility: Unavailable
        </StatusItem>
        <StatusItem $left="auto">
          <Svg w={22} h={24}>
            <path d="M6 3H1v4M16 3h5v4M1 18v5h5M21 18v5h-5M6 5h6l4 4v11H6zM12 5v4h4" strokeWidth={1.3} />
          </Svg>
          Focus
        </StatusItem>
        <ViewButton $left={26} $width={40}>
          <Svg w={22} h={20}>
            <path d="M1 1h9l1 1 1-1h9v17H12l-1 1-1-1H1zM11 2v16M4 5h4M4 9h4M4 13h4M14 5h4M14 9h4M14 13h4" strokeWidth={1.3} />
          </Svg>
        </ViewButton>
        <ViewButton $left={11} $width={60} $active>
          <Svg w={18} h={24}>
            <path d="M1 1h16v22H1zM4 5h10M4 9h10M4 13h10M4 17h10" strokeWidth={1.4} />
          </Svg>
        </ViewButton>
        <ViewButton $left={10} $width={40}>
          <Svg w={22} h={24}>
            <path d="M1 1h15v20H1zM4 5h9M4 9h6M4 13h5" strokeWidth={1.3} />
            <circle cx={15} cy={17} r={6} fill="#f3f2f1" strokeWidth={1.3} />
            <path d="M9 17h12M15 11v12" strokeWidth={1} />
          </Svg>
        </ViewButton>
        <ZoomSign $left={18}>−</ZoomSign>
        <ZoomSlider><ZoomThumb /><ZoomTick /></ZoomSlider>
        <ZoomSign $left={10}>+</ZoomSign>
        <StatusItem $left={20}>80%</StatusItem>
      </StatusBar>

      <Taskbar>
        <StartButton>
          <svg width={25} height={25} viewBox="0 0 25 25" fill="#fff">
            <path d="M0 3.5l10-1.4v9.7H0zM11.3 1.9L25 0v11.8H11.3zM0 13h10v9.8L0 21.4zM11.3 13H25v12l-13.7-1.9z" />
          </svg>
        </StartButton>
        <TaskSearch>
          <svg width={26} height={26} viewBox="0 0 26 26" fill="none" stroke="#e8e8e8" strokeWidth={1.6}>
            <circle cx={16} cy={10} r={8.5} />
            <path d="M10 16L2 25" />
          </svg>
          Type here to search
          <SearchArt width={112} height={52} viewBox="0 0 112 52">
            <defs>
              <radialGradient id="bowl" cx="0.5" cy="0.4" r="0.6">
                <stop offset="0" stopColor="#9ff0dc" />
                <stop offset="1" stopColor="#62c7ac" />
              </radialGradient>
              <linearGradient id="butter" x1="0" y1="0" x2="1" y2="1">
                <stop offset="0" stopColor="#ffe07a" />
                <stop offset="1" stopColor="#f8b52f" />
              </linearGradient>
            </defs>
            <path d="M1 14c0 14 8 24 20 28v3h14v-3c10-4 17-14 17-28z" fill="url(#bowl)" />
            <ellipse cx={26} cy={14} rx={25} ry={5.5} fill="#a7efdc" stroke="#6cc9b0" />
            <path d="M47 47l14-22" stroke="#b9b4c6" strokeWidth={5} strokeLinecap="round" />
            <g fill="none" stroke="#8f8d96" strokeWidth={1.3}>
              <ellipse cx={72} cy={13} rx={8} ry={14} transform="rotate(32 72 13)" />
              <ellipse cx={72} cy={13} rx={4} ry={14} transform="rotate(32 72 13)" />
              <path d="M62 25L80 1" />
            </g>
            <path d="M60 30l37-9 14 2v17L75 52H60z" fill="url(#butter)" />
            <path d="M60 30h15v22H60z" fill="#ffdc70" />
          </SearchArt>
        </TaskSearch>
        <TaskIcon $left={0} $width={72}>
          <svg width={26} height={24} viewBox="0 0 26 24" fill="none" stroke="#fff" strokeWidth={1.3}>
            <path d="M1 1h16M1 5h16M1 8h16v8H1zM1 19h16M1 23h16M24 1v8M24 14v9" />
            <rect x={22.5} y={9.5} width={3} height={3} fill="#fff" stroke="none" />
          </svg>
        </TaskIcon>
        <TaskIcon $left={12} $open><FolderLogo /></TaskIcon>
        <TaskIcon $left={14} $open><ChromeLogo /></TaskIcon>
        <TaskIcon $left={14} $open><EdgeLogo /></TaskIcon>
        <TaskIcon $left={14} $open><WhatsappLogo /><IconBadge>32</IconBadge></TaskIcon>
        <TaskIcon $left={8} $width={72} $active $open><WordLogo /></TaskIcon>
        <Tray>
          <TrayIcon $left={0}><White w={18} h={10}><path d="M1 9l8-8 8 8" /></White></TrayIcon>
          <TrayIcon $left={27}>
            <White w={24} h={20} sw={1.3}>
              <path d="M2 0v5M6 0v5M0 5h8v3l-3 3H3L0 8zM4 11v9M9 5h14v14H7" />
              <rect x={11} y={7} width={10} height={10} fill="#fff" stroke="none" />
            </White>
          </TrayIcon>
          <TrayIcon $left={29}>
            <White w={18} h={20} sw={1.2}>
              <path d="M1 20C1 10 8 2 17 1M6 20c0-6 4-11 11-13" opacity={0.5} />
              <path d="M11 20c0-3 2-6 6-7" />
              <circle cx={16} cy={18} r={1.5} fill="#fff" stroke="none" />
            </White>
          </TrayIcon>
          <TrayIcon $left={25}>
            <White w={23} h={24} sw={1.2}>
              <path d="M1 8h5l6-6v20l-6-6H1zM15 8c2 2 2 6 0 8" />
              <path d="M19 4c3 4 3 12 0 16" opacity={0.5} />
            </White>
          </TrayIcon>
          <TrayIcon $left={33}>
            <White w={21} h={28} sw={1.3}>
              <path d="M12 3c4-4 8 0 5 4l-10 15c-2 3-6 1-5-3l2-5M12 3l-1 12c0 3 4 3 5 0M17 9c3 0 4 3 1 4" />
            </White>
          </TrayIcon>
          <TrayIcon $left={32}>
            <White w={33} h={20} sw={1.3}>
              <rect x={0.7} y={0.7} width={31.6} height={18.6} />
              <path d="M4 6h25M4 10h25" strokeDasharray="2 1.5" />
              <path d="M4 15h3M9 15h14M25 15h4" />
            </White>
          </TrayIcon>
          <Clock>1:37 AM<br />5/21/2023</Clock>
          <Notify>
            <svg width={26} height={30} viewBox="0 0 26 30">
              <path d="M0 0h25v23H8l-8 7z" fill="#fff" />
              <path d="M4 6h17M4 11h17M4 16h12" stroke="#1b1b1b" strokeWidth={1.3} />
            </svg>
            <NotifyBadge>3</NotifyBadge>
          </Notify>
        </Tray>
      </Taskbar>
    </Shell>
  )
}
